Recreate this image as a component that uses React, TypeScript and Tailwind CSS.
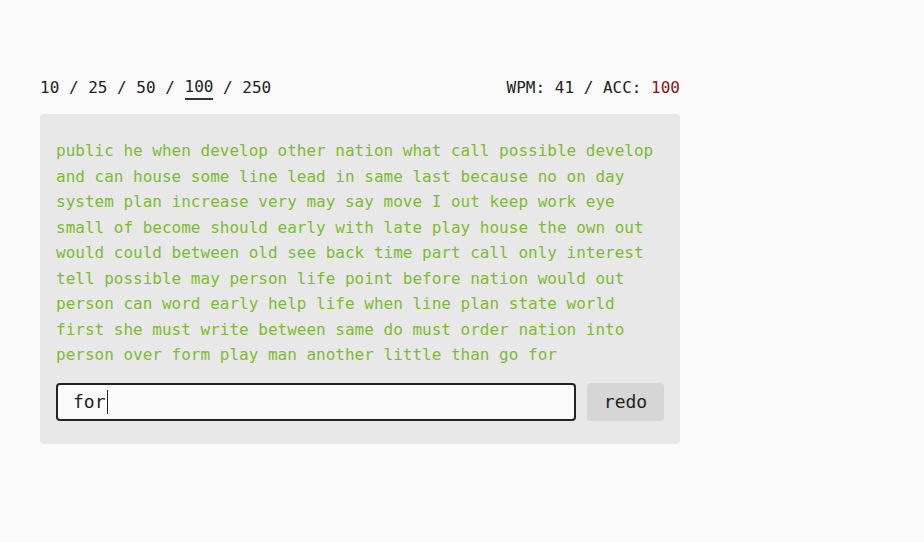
const words =
  "public he when develop other nation what call possible develop and can house some line lead in same last because no on day system plan increase very may say move I out keep work eye small of become should early with late play house the own out would could between old see back time part call only interest tell possible may person life point before nation would out person can word early help life when line plan state world first she must write between same do must order nation into person over form play man another little than go for";

const counts = [10, 25, 50, 100, 250];

const App = () => {
  return (
    <div className="min-h-[542px] w-full bg-[#fafafa] pt-[76px] pl-10 font-['DejaVu_Sans_Mono',monospace] text-[#222]">
      <div className="w-[640px]">
        {/* header: word counts + stats */}
        <div className="flex justify-between text-[16px] leading-6">
          <div className="flex">
            {counts.map((c, i) => (
              <span key={c} className="flex">
                {i > 0 && <span className="whitespace-pre"> / </span>}
                <span className={c === 100 ? "border-b-2 border-[#333] leading-[22px]" : ""}>{c}</span>
              </span>
            ))}
          </div>
          <div className="whitespace-pre">
            WPM: 41 / ACC: <span className="text-[#861616]">100</span>
          </div>
        </div>

        {/* typing card */}
        <div className="mt-[14px] rounded bg-[#e8e8e8] px-4 pt-6 pb-[23px]">
          <p className="text-[16px] leading-[25.5px] text-[#7cbc32]">{words}</p>
          <div className="mt-[15px] flex gap-[11px]">
            <div className="flex h-[38px] flex-1 items-center rounded border-2 border-[#222] bg-[#fafafa] pl-[15px] text-[18px]">
              for<span className="ml-[1px] h-[24px] w-[1px] bg-[#222]" />
            </div>
            <button className="h-[38px] w-[77px] rounded bg-[#d6d6d6] text-[18px] text-[#222]">
              redo
            </button>
          </div>
        </div>
      </div>
    </div>
  );
};

export default App;
